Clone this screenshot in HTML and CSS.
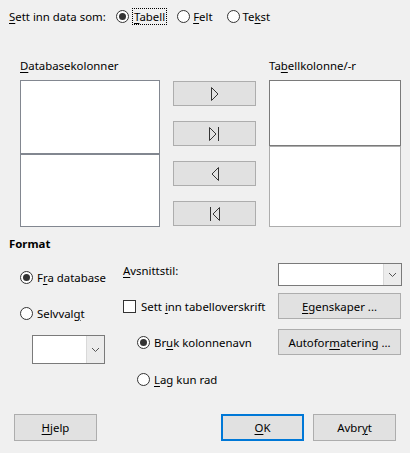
FILE: index.html
```html
<!DOCTYPE html>
<html>
<head>
<meta charset="utf-8">
<link rel="stylesheet" href="styles.css">
</head>
<body>
<div class="dlg">
  <div class="toprow">
    <span class="lbl"><u>S</u>ett inn data som:</span>
    <span class="opt o1"><span class="radio on"></span><span class="focus"><u>T</u>abell</span></span>
    <span class="opt o2"><span class="radio"></span><span class="otext"><u>F</u>elt</span></span>
    <span class="opt"><span class="radio"></span><span class="otext">Te<u>k</u>st</span></span>
  </div>

  <div class="cols">
    <div class="lcol">
      <div class="collbl"><u>D</u>atabasekolonner</div>
      <div class="list">
        <div class="lpart ltop"></div>
        <div class="lpart lbot"></div>
      </div>
    </div>
    <div class="mcol">
      <div class="abtn"><svg width="8" height="14" viewBox="0 0 8 14"><path d="M0.5 0.5 L7 7 L0.5 13.5 Z" fill="none" stroke="#333" stroke-width="1"/></svg></div>
      <div class="abtn"><svg width="11" height="14" viewBox="0 0 11 14"><path d="M0.5 0.5 L7 7 L0.5 13.5 Z" fill="none" stroke="#333" stroke-width="1"/><path d="M9.5 0 V14" stroke="#333" stroke-width="1"/></svg></div>
      <div class="abtn"><svg width="8" height="14" viewBox="0 0 8 14"><path d="M7.5 0.5 L1 7 L7.5 13.5 Z" fill="none" stroke="#333" stroke-width="1"/></svg></div>
      <div class="abtn"><svg width="11" height="14" viewBox="0 0 11 14"><path d="M1.5 0 V14" stroke="#333" stroke-width="1"/><path d="M10.5 0.5 L4 7 L10.5 13.5 Z" fill="none" stroke="#333" stroke-width="1"/></svg></div>
    </div>
    <div class="rcol">
      <div class="collbl">Ta<u>b</u>ellkolonne/-r</div>
      <div class="list">
        <div class="lpart rtop"></div>
        <div class="lpart rbot"></div>
      </div>
    </div>
  </div>

  <div class="fmt">Format</div>

  <div class="lower">
    <div class="c1">
      <div class="ropt r1"><span class="radio on"></span><span>F<u>r</u>a database</span></div>
      <div class="ropt r2"><span class="radio"></span><span>Selvval<u>g</u>t</span></div>
      <div class="combo small"><div class="cfield"></div><div class="cbtn"><svg width="7" height="4" viewBox="0 0 7 4"><path d="M0 0 L3.5 3.5 L7 0" fill="none" stroke="#555" stroke-width="1"/></svg></div></div>
    </div>
    <div class="c2">
      <div class="avs"><u>A</u>vsnittstil:</div>
      <div class="ropt chk"><span class="check"></span><span>Sett <u>i</u>nn tabelloverskrift</span></div>
      <div class="ropt r3"><span class="radio on"></span><span>Br<u>u</u>k kolonnenavn</span></div>
      <div class="ropt r4"><span class="radio"></span><span><u>L</u>ag kun rad</span></div>
    </div>
    <div class="c3">
      <div class="combo wide"><div class="cfield"></div><div class="cbtn"><svg width="7" height="4" viewBox="0 0 7 4"><path d="M0 0 L3.5 3.5 L7 0" fill="none" stroke="#555" stroke-width="1"/></svg></div></div>
      <div class="btn pb1"><u>E</u>genskaper ...</div>
      <div class="btn pb2">Autofor<u>m</u>atering ...</div>
    </div>
  </div>

  <div class="bottom">
    <div class="btn bb"><u>H</u>jelp</div>
    <div class="spacer"></div>
    <div class="btn bb ok"><u>O</u>K</div>
    <div class="btn bb cancel">Avbr<u>y</u>t</div>
  </div>
</div>
</body>
</html>
```

FILE: styles.css
```css
html, body {
  margin: 0;
  padding: 0;
  background: #f0f0f0;
}
body {
  font-family: "Noto Sans", "Open Sans", sans-serif;
  font-size: 11.4px;
  color: #000;
  width: 410px;
  height: 453px;
  overflow: hidden;
}
u { text-decoration: underline; text-underline-offset: 2px; }

.toprow {
  display: flex;
  align-items: center;
  height: 18px;
  padding: 7px 0 0 9px;
  white-space: nowrap;
}
.toprow .lbl { width: 93px; flex: none; margin-right: 14px; }
.opt { display: flex; align-items: center; flex: none; }
.opt .radio { margin-right: 3px; }
.o1 { margin-right: 10px; }
.o2 { margin-right: 14px; }
.focus {
  border: 1px dotted #000;
  padding: 0 1px;
  line-height: 15px;
}
.otext { line-height: 17px; }

.radio {
  width: 11px;
  height: 11px;
  border: 1px solid #333;
  border-radius: 50%;
  background: #fff;
  display: inline-flex;
  align-items: center;
  justify-content: center;
  flex: none;
}
.radio.on::after {
  content: "";
  width: 7px;
  height: 7px;
  border-radius: 50%;
  background: #333;
}
.check {
  width: 11px;
  height: 11px;
  border: 1px solid #333;
  background: #fff;
  flex: none;
}

.cols {
  display: flex;
  margin-top: 33px;
}
.collbl {
  height: 22px;
  line-height: 16px;
}
.lcol { margin-left: 20px; width: 140px; }
.list { display: flex; flex-direction: column; height: 147px; }
.lpart { background: #fff; }
.ltop { height: 72px; border: 1px solid #828790; }
.lbot { height: 71px; border: 1px solid #828790; }
.rtop { height: 64px; border: 1px solid #7a7a7a; }
.rbot { height: 79px; border: 1px solid #adadad; border-top: 1px solid #adadad; }

.mcol {
  margin-left: 13px;
  width: 83px;
  padding-top: 23px;
  display: flex;
  flex-direction: column;
  gap: 15px;
}
.abtn {
  height: 23px;
  background: #e1e1e1;
  border: 1px solid #adadad;
  display: flex;
  align-items: center;
  justify-content: center;
}
.rcol { margin-left: 13px; width: 132px; }

.fmt {
  font-weight: bold;
  margin: 9px 0 0 9px;
  line-height: 16px;
}

.lower {
  display: flex;
  height: 162px;
}
.ropt {
  display: flex;
  align-items: center;
  gap: 4px;
  height: 18px;
  white-space: nowrap;
}
.c1 { margin-left: 20px; width: 90px; display: flex; flex-direction: column; }
.r1 { margin-top: 16px; }
.r2 { margin-top: 18px; }
.combo {
  display: flex;
  border: 1px solid #7a7a7a;
  background: #fff;
}
.combo .cfield { flex: 1; }
.combo .cbtn {
  width: 17px;
  background: #ececec;
  border-left: 1px solid #d9d9d9;
  display: flex;
  align-items: center;
  justify-content: center;
}
.combo.small { margin-left: 12px; width: 71px; height: 27px; margin-top: 13px; }

.c2 { margin-left: 13px; width: 155px; display: flex; flex-direction: column; }
.avs { margin-top: 11px; line-height: 16px; }
.chk { margin-top: 18px; gap: 5px; }
.r3 { margin-top: 18px; margin-left: 14px; }
.r4 { margin-top: 19px; margin-left: 14px; }

.c3 { width: 124px; display: flex; flex-direction: column; }
.combo.wide { height: 21px; margin-top: 11px; }
.btn {
  background: #e1e1e1;
  border: 1px solid #adadad;
  display: flex;
  align-items: center;
  justify-content: center;
  box-sizing: border-box;
}
.pb1 { height: 26px; margin-top: 7px; width: 123px; }
.pb2 { height: 26px; margin-top: 10px; width: 123px; }

.bottom {
  display: flex;
  padding: 0 14px 0 14px;
}
.bb { width: 83px; height: 27px; }
.spacer { flex: 1; }
.ok { border: 2px solid #0078d7; }
.cancel { margin-left: 9px; }
```
